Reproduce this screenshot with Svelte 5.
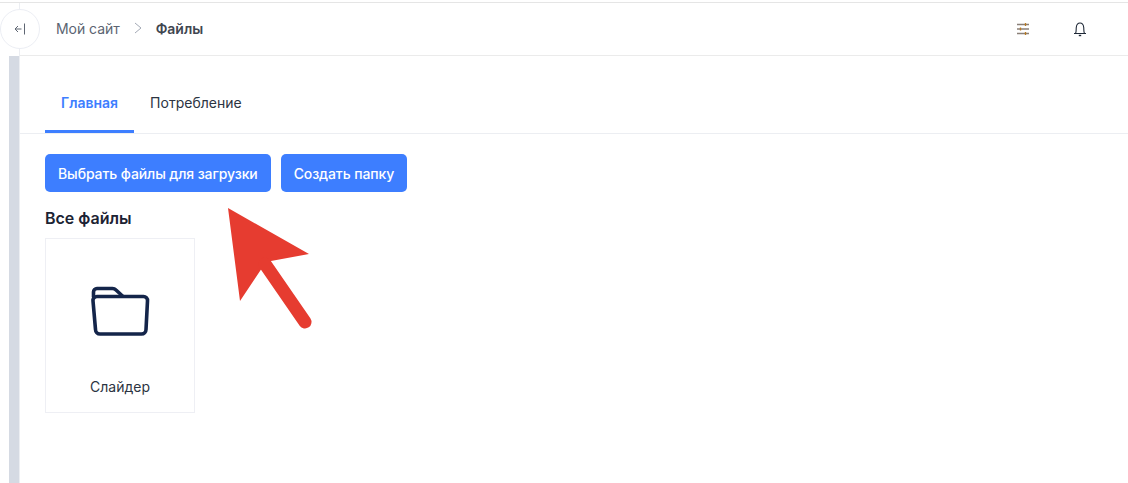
<script>
	const tabs = [
		{ title: 'Главная', active: true },
		{ title: 'Потребление', active: false }
	];
</script>

<div class="page">
	<aside class="rail">
		<div class="rail-top"></div>
		<div class="rail-bar"></div>
		<button class="collapse" aria-label="Свернуть">
			<svg width="12" height="12" viewBox="0 0 12 12" fill="none" stroke="#5f6673" stroke-width="1">
				<path d="M4 3 1 6 4 9M1 6H7.500" />
				<path d="M10.500 .5v11" />
			</svg>
		</button>
	</aside>

	<div class="main">
		<header class="topbar">
			<nav class="crumbs">
				<span>Мой сайт</span>
				<svg width="8" height="12" viewBox="0 0 8 12" fill="none" stroke="#a3a9b5" stroke-width="1">
					<path d="M1 1l6 5-6 5" />
				</svg>
				<b>Файлы</b>
			</nav>
			<div class="actions">
				<svg width="14" height="14" viewBox="0 0 14 14" fill="none" stroke="#8a8078" stroke-width="1.300">
					<path d="M1 2.500h12M1 7h12M1 11.500h12" />
					<path d="M9.500 1v3M4.500 5.500v3M9.500 10v3" stroke="#b9791f" />
				</svg>
				<svg width="14" height="16" viewBox="0 0 14 16" fill="none" stroke="#1f2937" stroke-width="1.100">
					<path d="M1 12.500h12M2.500 12.500C3.500 10.500 3 8.500 3.300 6.200 3.600 3.500 5 2 7 2s3.400 1.500 3.700 4.200c.3 2.300-.2 4.300.8 6.300" />
					<path d="M5.800 14.500h2.400" stroke-width="1.400" />
				</svg>
			</div>
		</header>

		<section class="content">
			<div class="tabs">
				{#each tabs as tab}
					<div class="tab" class:active={tab.active}>{tab.title}</div>
				{/each}
			</div>

			<div class="buttons">
				<button class="primary">Выбрать файлы для загрузки</button>
				<button class="primary">Создать папку</button>
			</div>

			<h2>Все файлы</h2>

			<div class="card">
				<svg width="60" height="52" viewBox="0 0 60 52" fill="none" stroke="#14254a" stroke-width="3.600" stroke-linejoin="round" stroke-linecap="round">
					<path d="M3.500 11V6a3.500 3.500 0 0 1 3.500-3.500H22.500c1.500 0 2.500.5 3.500 1.500L32.500 10" />
					<path d="M7 10.500H53.500a4 4 0 0 1 4 4.300L56 43.500a4.500 4.500 0 0 1-4.500 4.500H10a4.500 4.500 0 0 1-4.500-4.500L3 14.800a4 4 0 0 1 4-4.300Z" />
				</svg>
				<span>Слайдер</span>
			</div>
		</section>
	</div>

	<svg class="arrow" width="100" height="135" viewBox="0 0 100 135">
		<path d="M8 8 89 54 51 61 42 68 20 101Z" fill="#e63c30" />
		<path d="M45 64 85 122" stroke="#e63c30" stroke-width="13" stroke-linecap="round" fill="none" />
	</svg>
</div>

<style>
	:global(body) {
		background: #fff;
		font-family: Inter, 'Noto Sans', sans-serif;
	}
	.page {
		position: relative;
		display: flex;
		height: 481px;
		overflow: hidden;
		border-top: 1px solid #e5e5e5;
		margin-top: 2px;
		box-sizing: border-box;
	}
	.rail {
		position: relative;
		flex: none;
		width: 20px;
		display: flex;
		flex-direction: column;
		box-sizing: border-box;
		border-right: 1px solid #eceef2;
	}
	.rail-top {
		height: 53px;
		flex: none;
	}
	.rail-bar {
		flex: 1;
		width: 10px;
		margin-left: 9px;
		background: #d5dae3;
	}
	.collapse {
		position: absolute;
		left: 0;
		top: 6px;
		width: 40px;
		height: 40px;
		padding: 0;
		display: flex;
		align-items: center;
		justify-content: center;
		border: 1px solid #eceef4;
		border-radius: 50%;
		background: #fff;
		z-index: 1;
	}
	.main {
		flex: 1;
		min-width: 0;
	}
	.topbar {
		height: 53px;
		box-sizing: border-box;
		display: flex;
		align-items: center;
		justify-content: space-between;
		border-bottom: 1px solid #ebebeb;
		padding-left: 36px;
		padding-right: 41px;
	}
	.crumbs {
		display: flex;
		align-items: center;
		gap: 14px;
		font-size: 14px;
		letter-spacing: -0.04px;
		color: #5b6472;
		position: relative;
		top: -1px;
	}
	.crumbs b {
		font-weight: 600;
		color: #3f4650;
	}
	.actions {
		display: flex;
		align-items: center;
		gap: 43px;
	}
	.content {
		padding-top: 25px;
	}
	.tabs {
		display: flex;
		height: 52px;
		padding-left: 25px;
		border-bottom: 1px solid #eceef2;
	}
	.tab {
		padding: 13px 16px 0;
		font-size: 14px;
		font-weight: 400;
		color: #2c3442;
		box-sizing: border-box;
		height: 52px;
	}
	.tab.active {
		color: #3d7eff;
		font-weight: 600;
		border-bottom: 3px solid #3d7eff;
	}
	.buttons {
		display: flex;
		gap: 10px;
		margin: 20px 0 0 25px;
	}
	.primary {
		height: 38px;
		padding: 0 13px;
		border: none;
		border-radius: 5px;
		background: #3d7eff;
		color: #fff;
		font-family: inherit;
		font-size: 14px;
		font-weight: 500;
		letter-spacing: -0.1px;
	}
	h2 {
		margin: 16px 0 0 25px;
		font-size: 16px;
		line-height: 20px;
		font-weight: 600;
		color: #1c2333;
	}
	.card {
		margin: 10px 0 0 25px;
		width: 150px;
		height: 175px;
		box-sizing: border-box;
		border: 1px solid #eeeff4;
		display: flex;
		flex-direction: column;
		align-items: center;
		padding-top: 47px;
		font-size: 14px;
		color: #2c3442;
	}
	.card span {
		margin-top: 40px;
	}
	.arrow {
		position: absolute;
		left: 220px;
		top: 197px;
	}
</style>
